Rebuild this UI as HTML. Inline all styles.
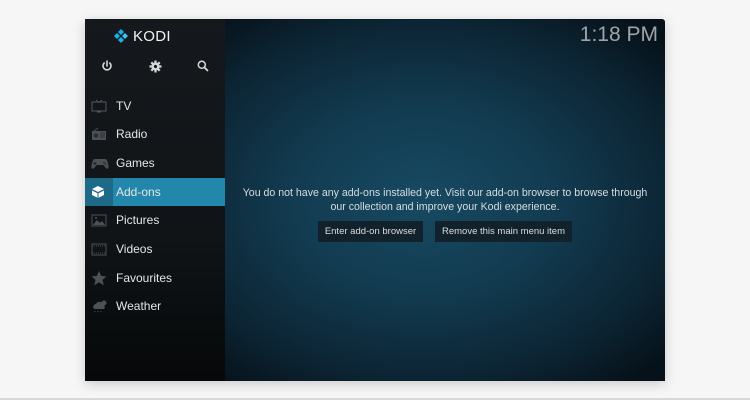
<!DOCTYPE html>
<html><head><meta charset="utf-8"><style>
*{margin:0;padding:0;box-sizing:border-box}
html,body{width:750px;height:400px;overflow:hidden;background:#f6f6f6;font-family:"Liberation Sans","DejaVu Sans",sans-serif}
.bl{position:absolute;left:0;top:398px;width:750px;height:2px;background:#d8d8d8}
.win{position:absolute;left:85px;top:19px;width:580px;height:362px;box-shadow:0 3px 12px rgba(0,0,0,.18);overflow:hidden;border-radius:0 3px 0 0}
.side{position:absolute;left:0;top:0;width:140px;height:362px;background:linear-gradient(#15191d,#101417 60%,#060809)}
.main{position:absolute;left:140px;top:0;width:440px;height:362px;background:radial-gradient(ellipse 75% 65% at 45% 50%,#174a62 0%,#123b50 40%,#0c2534 75%,#061119 100%)}
.logo{position:absolute;left:28px;top:9px;color:#f2f2f2;font-size:15px;letter-spacing:.3px}
.logo svg{vertical-align:-3px;margin-right:4px}
.tb svg{position:absolute;top:41px}
.item{position:absolute;left:0;width:140px;height:28px;color:#e6e6e6;font-size:12px;line-height:28px}
.item span{position:absolute;left:31px}
.item svg{position:absolute;left:6px;top:7px}
.act{background:#2386ab}
.act .ic{position:absolute;left:0;top:0;width:28px;height:28px;background:#1c6a88}
.clock{position:absolute;right:7px;top:4px;color:#9ea4a8;font-size:21px;letter-spacing:0;white-space:nowrap}
.msg{position:absolute;left:-20px;width:480px;top:167px;text-align:center;color:#d6dde0;font-size:10.6px;line-height:14px;white-space:nowrap}
.btn{position:absolute;top:202px;height:21px;background:#11222d;color:#d9dee0;font-size:9.5px;line-height:21px;text-align:center;white-space:nowrap}
</style></head><body>
<div class="bl"></div>
<div class="win">
<div class="side">
 <div class="logo"><svg width="16" height="16" viewBox="0 0 16 16"><g fill="#17b2e8"><path d="M8 1l3 3-3 3-3-3z"/><path d="M1 8l3-3 3 3-3 3z"/><path d="M8 9l3 3-3 3-3-3z"/><path d="M12 5l3 3-3 3-3-3z" fill="#38c4f0"/></g></svg>KODI</div>
 <div class="tb">
  <svg style="left:16px" width="12" height="12" viewBox="0 0 12 12"><path d="M6 1v5M3.2 3A4 4 0 1 0 8.8 3" stroke="#d8d8d8" stroke-width="1.6" fill="none" stroke-linecap="round"/></svg>
  <svg style="left:64px" width="13" height="13" viewBox="0 0 13 13"><circle cx="6.5" cy="6.5" r="4" fill="#d8d8d8"/><g stroke="#d8d8d8" stroke-width="2.2"><path d="M6.5 0.5v12M0.5 6.5h12M2.3 2.3l8.4 8.4M10.7 2.3l-8.4 8.4"/></g><circle cx="6.5" cy="6.5" r="1.6" fill="#15191d"/></svg>
  <svg style="left:112px" width="12" height="12" viewBox="0 0 12 12"><circle cx="4.8" cy="4.8" r="3.5" stroke="#d8d8d8" stroke-width="1.5" fill="none"/><path d="M7.5 7.5l3.5 3.5" stroke="#d8d8d8" stroke-width="1.8"/></svg>
 </div>
 <div class="item" style="top:73px"><svg width="16" height="14" viewBox="0 0 16 14"><rect x="1" y="3" width="14" height="9" fill="none" stroke="#555a5e" stroke-width="1"/><path d="M5 1l3 2 3-2M6 13h4" stroke="#555a5e"/></svg><span>TV</span></div>
 <div class="item" style="top:101px"><svg width="16" height="14" viewBox="0 0 16 14"><rect x="1" y="4" width="14" height="9" fill="#4c5155"/><circle cx="5" cy="8.5" r="2.3" fill="#2a2e31"/><path d="M9 6h5M9 8h5M9 10h5" stroke="#2a2e31"/><path d="M3 4l4-3" stroke="#4c5155"/></svg><span>Radio</span></div>
 <div class="item" style="top:130px"><svg width="18" height="14" viewBox="0 0 18 14"><path d="M4 3h10c2 0 3 3 3.5 7s-2 3-3.5 1l-1.5-2h-7l-1.5 2c-1.5 2-4 3-3.5-1S2 3 4 3z" fill="#4c5155"/><path d="M4 6v3M2.5 7.5h3" stroke="#1a1e21"/><circle cx="13" cy="6.5" r=".8" fill="#1a1e21"/><circle cx="14.5" cy="8" r=".8" fill="#1a1e21"/></svg><span>Games</span></div>
 <div class="item act" style="top:159px"><div class="ic"></div><svg width="14" height="14" viewBox="0 0 14 14"><path d="M7 1l6 3-6 3-6-3z" fill="#fff"/><path d="M1 5.5l6 3 6-3V10l-6 3-6-3z" fill="#fff"/><path d="M7 8.5V13" stroke="#1c6a88"/></svg><span>Add-ons</span></div>
 <div class="item" style="top:187px"><svg width="16" height="14" viewBox="0 0 16 14"><rect x="1" y="2" width="14" height="11" fill="none" stroke="#4c5155"/><path d="M2 12l4-5 3 3 2-2 3 4z" fill="#4c5155"/><circle cx="5" cy="5" r="1" fill="#4c5155"/></svg><span>Pictures</span></div>
 <div class="item" style="top:216px"><svg width="16" height="14" viewBox="0 0 16 14"><rect x="1" y="2" width="14" height="11" fill="none" stroke="#4c5155"/><path d="M1 4h14M1 11h14" stroke="#4c5155" stroke-dasharray="1 1"/></svg><span>Videos</span></div>
 <div class="item" style="top:245px"><svg width="16" height="15" viewBox="0 0 16 15"><path d="M8 0l2.2 5 5.3.4-4 3.5 1.3 5.3L8 11.4 3.2 14.2l1.3-5.3-4-3.5L5.8 5z" fill="#4c5155"/></svg><span>Favourites</span></div>
 <div class="item" style="top:273px"><svg width="18" height="15" viewBox="0 0 18 15"><path d="M3 10a3 3 0 0 1 2-5 4 4 0 0 1 7.5 1A2.5 2.5 0 0 1 13 10z" fill="#4c5155"/><circle cx="13" cy="4" r="2.5" fill="#4c5155"/><path d="M4 12v1M7 12v1M10 12v1" stroke="#4c5155"/></svg><span>Weather</span></div>
</div>
<div class="main">
 <div class="clock">1:18 PM</div>
 <div class="msg">You do not have any add-ons installed yet. Visit our add-on browser to browse through<br>our collection and improve your Kodi experience.</div>
 <div class="btn" style="left:93px;width:105px">Enter add-on browser</div>
 <div class="btn" style="left:210px;width:137px">Remove this main menu item</div>
</div>
</div>
</body></html>
